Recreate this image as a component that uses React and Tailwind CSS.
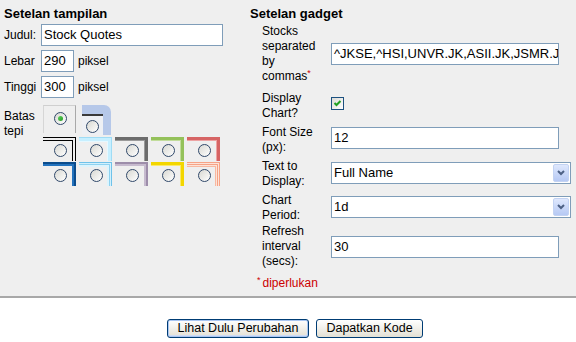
import React from "react";

function Radio({ checked }) {
  return (
    <div className="w-[13px] h-[13px] rounded-full border border-[#30486a] bg-gradient-to-br from-[#d8d8d2] to-white flex items-center justify-center">
      {checked && <div className="w-[5px] h-[5px] rounded-full bg-gradient-to-br from-[#5fd35f] to-[#1f9a1f]" />}
    </div>
  );
}

function Field({ w, children }) {
  return (
    <div className={`${w} h-[22px] border border-[#7f9db9] bg-white pl-[2px] text-[13px] leading-[20px] overflow-hidden whitespace-nowrap`}>
      {children}
    </div>
  );
}

function SelectBox({ children }) {
  return (
    <div className="w-[240px] h-[22px] border border-[#7f9db9] bg-white flex items-center">
      <div className="flex-1 pl-[2px] text-[13px] leading-[20px] whitespace-nowrap overflow-hidden">{children}</div>
      <div className="w-[16px] h-[18px] mr-[1px] rounded-[2px] border border-[#c3d3f3] bg-gradient-to-b from-[#dfe8fd] to-[#b6c9f4] flex items-center justify-center">
        <svg width="8" height="6" viewBox="0 0 8 6">
          <path d="M1 1 L4 4 L7 1" stroke="#4d6185" strokeWidth="2" fill="none" />
        </svg>
      </div>
    </div>
  );
}

const row2 = [
  "shadow-[inset_-1px_1px_0_#000,inset_-3px_3px_0_#efefef,inset_-4px_4px_0_#000]",
  "shadow-[inset_-1px_1px_0_#9fdcf5,inset_-4px_4px_0_#c6efff,inset_-5px_5px_0_#e6f8ff]",
  "shadow-[inset_-3px_3px_0_#6c6c6c,inset_-4px_4px_0_#9a9a9a]",
  "shadow-[inset_-3px_3px_0_#94c15a,inset_-4px_4px_0_#c2dd9c]",
  "shadow-[inset_-3px_3px_0_#d66464,inset_-4px_4px_0_#eda4a4]",
];
const row3 = [
  "shadow-[inset_-2px_2px_0_#0b4c8c,inset_-4px_4px_0_#2272bd]",
  "shadow-[inset_-1px_1px_0_#6fc2ea,inset_-2px_2px_0_#d2f0fc,inset_-3px_3px_0_#8fd2f0,inset_-5px_5px_0_#dcf4fd]",
  "shadow-[inset_-2px_2px_0_#9d8daa,inset_-4px_4px_0_#c6bace]",
  "shadow-[inset_-3px_3px_0_#f3d600,inset_-4px_4px_0_#fbe96a]",
  "shadow-[inset_-1px_1px_0_#f6a386,inset_-2px_2px_0_#fde3d8,inset_-3px_3px_0_#f6a386,inset_-4px_4px_0_#fde3d8,inset_-5px_5px_0_#f7b8a0]",
];

function FrameRow({ items }) {
  return (
    <div className="flex h-[25px] pl-[2px]">
      {items.map((c, i) => (
        <div key={i} className={`w-[33px] h-[24px] mr-[3px] pl-[11px] pt-[7px] ${c}`}>
          <Radio />
        </div>
      ))}
    </div>
  );
}

export default function App() {
  return (
    <div className="w-[576px] h-[342px] overflow-hidden bg-white text-black font-['Liberation_Sans',Arial,sans-serif]">
      <div className="h-[298px] bg-[#efefef] border-b-2 border-[#a8a8a8] flex">
        {/* Left column */}
        <div className="w-[247px] pl-[4px] pt-[6px]">
          <div className="text-[13px] font-bold leading-[15px]">Setelan tampilan</div>
          <div className="mt-[3px] flex items-center h-[22px] text-[12px]">
            <div className="w-[37px]">Judul:</div>
            <Field w="w-[182px]">Stock Quotes</Field>
          </div>
          <div className="mt-[4px] flex items-center h-[22px] text-[12px]">
            <div className="w-[37px]">Lebar</div>
            <Field w="w-[33px]">290</Field>
            <div className="ml-[4px]">piksel</div>
          </div>
          <div className="mt-[4px] flex items-center h-[22px] text-[12px]">
            <div className="w-[37px]">Tinggi</div>
            <Field w="w-[33px]">300</Field>
            <div className="ml-[4px]">piksel</div>
          </div>
          <div className="mt-[6px] flex">
            <div className="w-[37px] text-[12px] leading-[15px] pt-[5px]">
              Batas
              <br />
              tepi
            </div>
            <div className="flex flex-col">
              <div className="flex h-[33px] items-start pt-[1px] pl-[2px]">
                <div className="w-[33px] h-[28px] border-t border-l border-r border-t-[#cfcfcf] border-l-[#d6d6d6] border-r-[#a9a9a9] pl-[10px] pt-[6px]">
                  <Radio checked />
                </div>
                <div className="ml-[6px] w-[29px] h-[30px] bg-[#b6c8e9] rounded-tr-[7px] pt-[9px] pr-[8px] flex flex-col">
                  <div className="flex-1 border-t-2 border-[#3a3a3a] bg-[#eef0f4] pl-[4px] pt-[4px]">
                    <Radio />
                  </div>
                </div>
              </div>
              <FrameRow items={row2} />
              <FrameRow items={row3} />
            </div>
          </div>
        </div>

        {/* Right column */}
        <div className="flex-1 pt-[6px]">
          <div className="ml-[3px] text-[13px] font-bold leading-[15px]">Setelan gadget</div>
          <div className="pl-[15px] text-[12px] leading-[15px]">
            <div className="mt-[3px] flex items-center h-[60px]">
              <div className="w-[69px]">
                Stocks
                <br />
                separated
                <br />
                by
                <br />
                commas
                <span className="text-[#cc0000] text-[9px] leading-none align-top">*</span>
              </div>
              <Field w="w-[228px]">^JKSE,^HSI,UNVR.JK,ASII.JK,JSMR.JK,TLKM.JK</Field>
            </div>
            <div className="mt-[7px] flex h-[30px]">
              <div className="w-[69px]">
                Display
                <br />
                Chart?
              </div>
              <div className="mt-[6px] w-[13px] h-[13px] border border-[#1c5180] bg-gradient-to-br from-[#dcdcd7] to-white flex items-center justify-center">
                <svg width="9" height="9" viewBox="0 0 9 9">
                  <path d="M1.5 4 L3.5 6 L7.5 2" stroke="#21a121" strokeWidth="2" fill="none" />
                </svg>
              </div>
            </div>
            <div className="mt-[4px] flex h-[30px]">
              <div className="w-[69px]">
                Font Size
                <br />
                (px):
              </div>
              <div className="mt-[2px]">
                <Field w="w-[228px]">12</Field>
              </div>
            </div>
            <div className="mt-[4px] flex h-[30px]">
              <div className="w-[69px]">
                Text to
                <br />
                Display:
              </div>
              <div className="mt-[3px]">
                <SelectBox>Full Name</SelectBox>
              </div>
            </div>
            <div className="mt-[4px] flex h-[30px]">
              <div className="w-[69px]">
                Chart
                <br />
                Period:
              </div>
              <div className="mt-[3px]">
                <SelectBox>1d</SelectBox>
              </div>
            </div>
            <div className="mt-[1px] flex h-[45px]">
              <div className="w-[69px]">
                Refresh
                <br />
                interval
                <br />
                (secs):
              </div>
              <div className="mt-[12px]">
                <Field w="w-[228px]">30</Field>
              </div>
            </div>
            <div className="mt-[7px] -ml-[5px] flex items-start text-[#cc0000]">
              <span className="text-[9px] leading-none mr-[2px]">*</span>
              <span>diperlukan</span>
            </div>
          </div>
        </div>
      </div>

      <div className="flex pl-[167px] pt-[21px] gap-[7px]">
        <button className="w-[142px] h-[19px] rounded-[3px] border border-[#003c74] bg-gradient-to-b from-white to-[#e3e0d4] shadow-[inset_0_0_0_1px_#a9c6f2,inset_0_-1px_0_1px_#cfdcf5] text-[12.5px] leading-[17px] text-black">
          Lihat Dulu Perubahan
        </button>
        <button className="w-[107px] h-[19px] rounded-[3px] border border-[#003c74] bg-gradient-to-b from-white to-[#e3e0d4] text-[12.5px] leading-[17px] text-black">
          Dapatkan Kode
        </button>
      </div>
    </div>
  );
}
